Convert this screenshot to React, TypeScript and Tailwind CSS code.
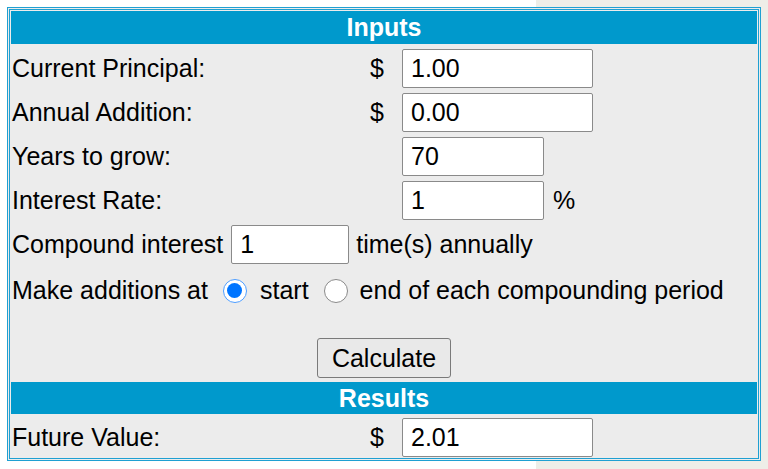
import React from 'react'

const font = { fontFamily: '"Liberation Sans", Arial, sans-serif' }

function Field({ value, w = 'w-[191px]' }: { value: string; w?: string }) {
  return (
    <div className={`${w} h-[39px] shrink-0 bg-white border border-[#8a8a8a] rounded-[2px] pl-[8px] flex items-center text-[25px] leading-none text-black`}>
      {value}
    </div>
  )
}

function Radio({ checked }: { checked?: boolean }) {
  return checked ? (
    <span className="w-[24px] h-[24px] shrink-0 rounded-full border-[1.5px] border-[#4d9dff] bg-white flex items-center justify-center">
      <span className="w-[15px] h-[15px] rounded-full bg-[#0075ff]" />
    </span>
  ) : (
    <span className="block w-[24px] h-[24px] shrink-0 rounded-full border border-[#8a8a8a] bg-white" />
  )
}

function Row({ label, dollar, children }: { label: string; dollar?: boolean; children: React.ReactNode }) {
  return (
    <div className="flex items-center h-[39px]">
      <div className="w-[349px] pl-px">{label}</div>
      <div className="w-[34px] text-center">{dollar ? '$' : ''}</div>
      <div className="ml-[8px] flex items-center gap-[9px]">{children}</div>
    </div>
  )
}

export default function App() {
  return (
    <div
      className="min-h-screen w-full pt-[7px] pl-[7px] bg-[linear-gradient(to_right,#ffffff_536px,#eeeee8_536px)] text-black"
      style={font}
    >
      <div className="w-[754px] border-[3px] border-double border-[#1fa0d2] p-px bg-[#ececec] text-[25px] leading-none">
        <div className="h-[33px] bg-[#0099cc] text-white font-bold flex items-center justify-center">Inputs</div>

        <div className="mt-[5px] flex flex-col gap-[5px]">
          <Row label="Current Principal:" dollar>
            <Field value="1.00" />
          </Row>
          <Row label="Annual Addition:" dollar>
            <Field value="0.00" />
          </Row>
          <Row label="Years to grow:">
            <Field value="70" w="w-[142px]" />
          </Row>
          <Row label="Interest Rate:">
            <Field value="1" w="w-[142px]" />
            <span>%</span>
          </Row>
          <div className="flex items-center h-[39px] pl-px">
            <span>Compound interest</span>
            <span className="ml-[8px] flex">
              <Field value="1" w="w-[118px]" />
            </span>
            <span className="ml-[7px]">time(s) annually</span>
          </div>
          <div className="mt-[2px] flex items-center h-[39px] pl-px">
            <span>Make additions at</span>
            <span className="ml-[15px] flex">
              <Radio checked />
            </span>
            <span className="ml-[13px]">start</span>
            <span className="ml-[15px] flex">
              <Radio />
            </span>
            <span className="ml-[12px]">end of each compounding period</span>
          </div>
        </div>

        <div className="mt-[28px] flex justify-center">
          <button className="w-[134px] h-[40px] bg-[#e9e9e9] border border-[#7a7a7a] rounded-[3px] text-[25px] leading-none text-black">
            Calculate
          </button>
        </div>

        <div className="mt-[4px] h-[32px] bg-[#0099cc] text-white font-bold flex items-center justify-center">Results</div>

        <div className="mt-[4px]">
          <Row label="Future Value:" dollar>
            <Field value="2.01" />
          </Row>
        </div>
      </div>
    </div>
  )
}
